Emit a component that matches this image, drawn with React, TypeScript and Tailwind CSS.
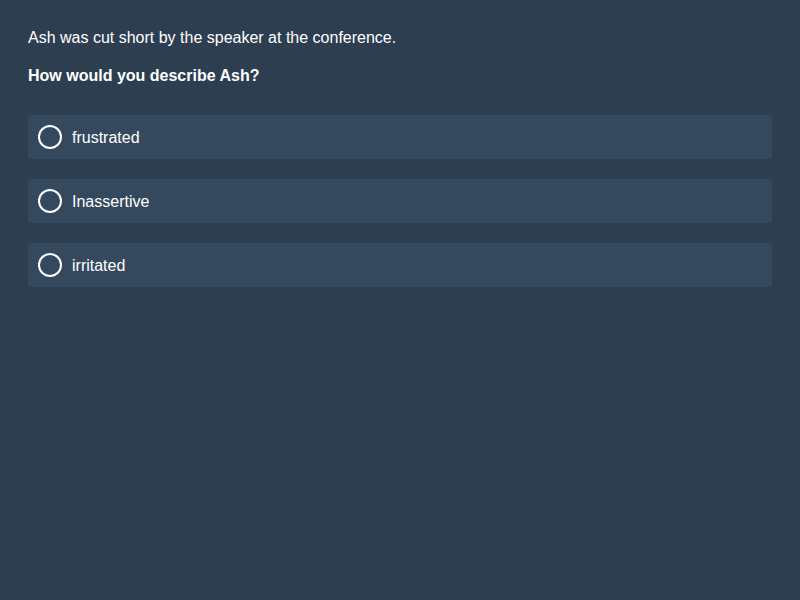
const options = ["frustrated", "Inassertive", "irritated"];

export default function App() {
  return (
    <div className="min-h-[600px] w-full bg-[#2c3e50] p-7 text-white font-['Liberation_Sans',Arial,sans-serif] text-base leading-5">
      <p>Ash was cut short by the speaker at the conference.</p>
      <p className="mt-[18px] font-bold">How would you describe Ash?</p>
      <div className="mt-[29px] flex flex-col gap-5">
        {options.map((o) => (
          <label key={o} className="flex h-11 items-center gap-[10px] rounded bg-[#34495e] pl-[10px] cursor-pointer">
            <span className="h-6 w-6 rounded-full border-2 border-white" />
            <span className="pt-0.5">{o}</span>
          </label>
        ))}
      </div>
    </div>
  );
}
